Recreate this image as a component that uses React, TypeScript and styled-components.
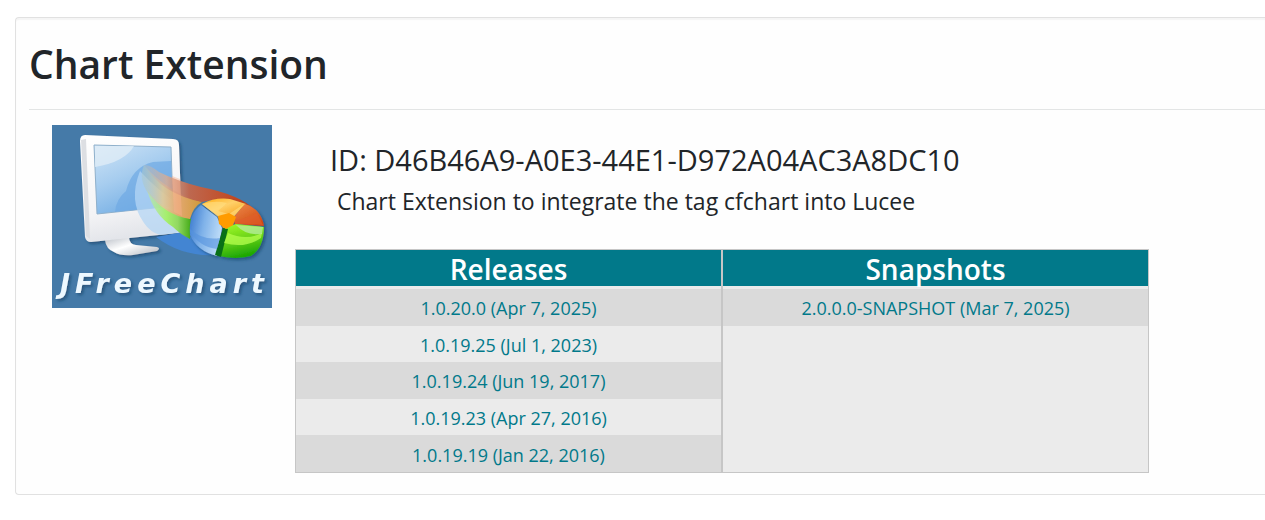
import React from "react";
import styled, { createGlobalStyle } from "styled-components";

const GlobalStyle = createGlobalStyle`
  *, *::before, *::after { box-sizing: border-box; }
  body {
    margin: 0;
    background: #fff;
    color: #212529;
    font-family: "Segoe UI", "Open Sans", "Noto Sans", sans-serif;
  }
`;

const Page = styled.main`
  padding: 17px 0 24px 15px;
`;

const Card = styled.section`
  padding: 20px 0 21px 13px;
  background: #fefefe;
  border: 1px solid #e1e1e1;
  border-right: 0;
  border-radius: 4px 0 0 4px;
  box-shadow: inset 0 2px 1px #f5f5f5;
`;

const Title = styled.h1`
  margin: 0;
  padding-bottom: 19px;
  border-bottom: 1px solid #e3e5e5;
  font-size: 39px;
  line-height: 52px;
  font-weight: 600;
`;

const Body = styled.div`
  display: flex;
  align-items: flex-start;
  gap: 23px;
  padding: 15px 23px 0;
`;

const Logo = styled.svg`
  flex: none;
  width: 220px;
  height: 183px;
`;

const Details = styled.div`
  flex: 1;
  min-width: 0;
  max-width: 854px;
  padding-top: 16px;
`;

const Identifier = styled.h2`
  margin: 0;
  padding-left: 35px;
  font-size: 29px;
  line-height: 38px;
  font-weight: 400;
`;

const Description = styled.p`
  margin: 0 0 27px;
  padding: 2px 0 0 42px;
  font-size: 23px;
  line-height: 41px;
`;

const Versions = styled.table`
  width: 100%;
  height: 224px;
  table-layout: fixed;
  border-collapse: separate;
  border-spacing: 0;
  background: #ebebeb;
  border-top: 1px solid #c6c6c6;
  border-bottom: 1px solid #c6c6c6;
  text-align: center;
`;

const HeadCell = styled.th`
  height: 39px;
  padding: 0;
  background: #01798a;
  background-clip: padding-box;
  border: 1px solid #c6c6c6;
  border-width: 0 1px;
  box-shadow: inset 0 -3px #ebebeb;
  color: #fff;
  font-size: 28px;
  line-height: 39px;
  font-weight: 600;
`;

const Cell = styled.td<{ $shaded?: boolean }>`
  padding: 2px 0 0;
  background: ${({ $shaded }) => ($shaded ? "#dadada" : "#ebebeb")};
  border: 1px solid #c6c6c6;
  border-width: 0 1px;
  font-size: 18px;
  line-height: 34px;
`;

const Download = styled.a`
  color: #01798a;
  text-decoration: none;
  &:hover { text-decoration: underline; }
`;

const releases = [
  "1.0.20.0 (Apr 7, 2025)",
  "1.0.19.25 (Jul 1, 2023)",
  "1.0.19.24 (Jun 19, 2017)",
  "1.0.19.23 (Apr 27, 2016)",
  "1.0.19.19 (Jan 22, 2016)",
];
const snapshot = "2.0.0.0-SNAPSHOT (Mar 7, 2025)";

function ChartLogo() {
  return (
    <Logo viewBox="0 0 220 183" role="img" aria-label="JFreeChart">
      <defs>
        <linearGradient id="screen" x1="0" y1="0" x2="0.5" y2="1">
          <stop offset="0" stopColor="#cfe4f6" />
          <stop offset="0.5" stopColor="#a7cdef" />
          <stop offset="1" stopColor="#74aee4" />
        </linearGradient>
        <linearGradient id="frame" x1="0" y1="0" x2="0.2" y2="1">
          <stop offset="0" stopColor="#ffffff" />
          <stop offset="0.75" stopColor="#f3f3f5" />
          <stop offset="1" stopColor="#e3e5ea" />
        </linearGradient>
        <linearGradient id="stand" x1="0" y1="0" x2="1" y2="1">
          <stop offset="0" stopColor="#b9bec6" />
          <stop offset="0.45" stopColor="#ffffff" />
          <stop offset="1" stopColor="#b2b7bf" />
        </linearGradient>
        <linearGradient id="redTrail">
          <stop offset="0" stopColor="#a9bccb" stopOpacity="0.5" />
          <stop offset="0.2" stopColor="#d6ac95" stopOpacity="0.85" />
          <stop offset="0.4" stopColor="#bd6850" />
          <stop offset="1" stopColor="#c63a0a" />
        </linearGradient>
        <linearGradient id="orangeTrail">
          <stop offset="0" stopColor="#a9c8cd" stopOpacity="0.5" />
          <stop offset="0.35" stopColor="#dfc997" stopOpacity="0.9" />
          <stop offset="0.6" stopColor="#e3a871" />
          <stop offset="1" stopColor="#cf9a38" />
        </linearGradient>
        <linearGradient id="greenTrail">
          <stop offset="0" stopColor="#b9e4b0" stopOpacity="0.7" />
          <stop offset="0.45" stopColor="#a5ef6c" />
          <stop offset="0.7" stopColor="#92d862" />
          <stop offset="1" stopColor="#43ab16" />
        </linearGradient>
        <linearGradient id="orangeSlice" x1="0" y1="0" x2="0.6" y2="1">
          <stop offset="0" stopColor="#ffad13" />
          <stop offset="0.4" stopColor="#ffd069" />
          <stop offset="1" stopColor="#f59400" />
        </linearGradient>
        <linearGradient id="redSlice" x1="0" y1="0" x2="0.8" y2="1">
          <stop offset="0" stopColor="#ee8a4b" />
          <stop offset="1" stopColor="#cf480d" />
        </linearGradient>
        <linearGradient id="greenSlice" x1="0" y1="0" x2="0.3" y2="1">
          <stop offset="0" stopColor="#a6ff25" />
          <stop offset="0.5" stopColor="#6fd61c" />
          <stop offset="1" stopColor="#1fa804" />
        </linearGradient>
        <linearGradient id="blueSlice" x1="0" y1="0" x2="1" y2="0.3">
          <stop offset="0" stopColor="#3474cc" />
          <stop offset="0.5" stopColor="#7fb2e9" />
          <stop offset="1" stopColor="#b9d9f7" />
        </linearGradient>
        <filter id="shade" x="-20%" y="-20%" width="140%" height="140%">
          <feDropShadow dx="2" dy="2" stdDeviation="1.5" floodColor="#173c60" floodOpacity="0.6" />
        </filter>
      </defs>
      <rect width="220" height="183" fill="#457aa8" />

      <g filter="url(#shade)">
        <path d="M53 115L77 112Q77 119 84 120L105 122Q109 123 105 126L81 130Q68 131 62 127Q54 124 53 115Z" fill="url(#stand)" />
        <path d="M33 10L121 14Q127 14 127 20L130 104Q130 108 126 108L39 117Q34 117 33 112L28 16Q28 10 33 10Z" fill="url(#frame)" />
      </g>
      <path d="M29 15L34 14L38 114L34 111Z" fill="#dddfe3" />
      <path d="M42 20L119 22L121 81L45 89Z" fill="url(#screen)" stroke="#8fb0cb" />
      <path d="M63 87Q64 74 74 66Q80 42 101 37L119 36L121 81Z" fill="#6faae4" opacity="0.7" />
      <path d="M43 21L82 21Q73 37 43 42Z" fill="#e1edf7" opacity="0.75" />
      <path d="M88 46Q76 76 92 98Q98 107 108 110L130 107L130 82Q104 64 88 46Z" fill="#b4d5f4" opacity="0.75" />

      <path d="M104 112L131 107L140 113Q148 127 164 130Q130 132 104 112Z" fill="#4385d2" />
      <path d="M95 65Q102 90 121 102Q128 109 138 114L139 94L122 87Q106 80 95 65Z" fill="url(#greenTrail)" />
      <path d="M92 40Q86 54 96 68Q113 90 138 94Q141 82 150 77Q116 68 92 40Z" fill="url(#orangeTrail)" />
      <path d="M92 40Q97 39 107 47Q125 56 149 62Q190 70 205 87L193 79Q169 71 150 77Q110 69 92 40Z" fill="url(#redTrail)" />
      <path d="M120 51L128 54L130 91L122 87Z" fill="#f8b28e" opacity="0.45" />

      <g filter="url(#shade)">
        <path d="M149 80L165 92L170 103L165 131Q145 126 138 110Q136 89 149 80Z" fill="url(#blueSlice)" />
        <path d="M150 79Q163 72 178 74L194 79L182 91L181 101L171 103L166 91Z" fill="url(#orangeSlice)" />
        <path d="M193 79Q209 84 212 101L183 99L181 93Z" fill="url(#redSlice)" />
        <path d="M173 103L184 99L212 102Q212 123 199 131Q184 135 167 131Z" fill="url(#greenSlice)" />
      </g>
      <path d="M171 103L176 104L169 132L163 130Z" fill="#087017" />
      <path d="M138 104Q151 116 168 113L165 124Q148 122 138 107Z" fill="#5593dd" opacity="0.6" />
      <path d="M176 108Q194 116 210 108L209 113Q193 124 172 118Z" fill="#b5ff4d" opacity="0.75" />
      <path d="M184 100L211 102L210 109Q194 111 184 100Z" fill="#b8eda2" opacity="0.75" />
      <path d="M150 79Q163 75 175 78L166 86L177 89L192 79L181 93L166 92Z" fill="#ffe083" opacity="0.6" />
      <path d="M166 91L177 88L184 92L181 100L174 104L167 99Z" fill="#ff9b00" />
      <path d="M183 95Q195 94 205 88L211 100L184 98Z" fill="#e0602d" opacity="0.65" />

      <text
        x="8"
        y="168"
        fill="#edf8ff"
        fontFamily="Verdana, 'DejaVu Sans', sans-serif"
        fontSize="27"
        fontWeight="700"
        fontStyle="italic"
        letterSpacing="5"
        filter="url(#shade)"
      >
        JFreeChart
      </text>
    </Logo>
  );
}

export default function App() {
  return (
    <>
      <GlobalStyle />
      <Page>
        <Card>
          <Title>Chart Extension</Title>
          <Body>
            <ChartLogo />
            <Details>
              <Identifier>ID: D46B46A9-A0E3-44E1-D972A04AC3A8DC10</Identifier>
              <Description>Chart Extension to integrate the tag cfchart into Lucee</Description>
              <Versions>
                <thead>
                  <tr>
                    <HeadCell scope="col">Releases</HeadCell>
                    <HeadCell scope="col">Snapshots</HeadCell>
                  </tr>
                </thead>
                <tbody>
                  {releases.map((release, index) => (
                    <tr key={release}>
                      <Cell $shaded={index % 2 === 0}>
                        <Download href="#">{release}</Download>
                      </Cell>
                      {index === 0 && (
                        <Cell $shaded>
                          <Download href="#">{snapshot}</Download>
                        </Cell>
                      )}
                      {index === 1 && <Cell rowSpan={releases.length - 1} />}
                    </tr>
                  ))}
                </tbody>
              </Versions>
            </Details>
          </Body>
        </Card>
      </Page>
    </>
  );
}
